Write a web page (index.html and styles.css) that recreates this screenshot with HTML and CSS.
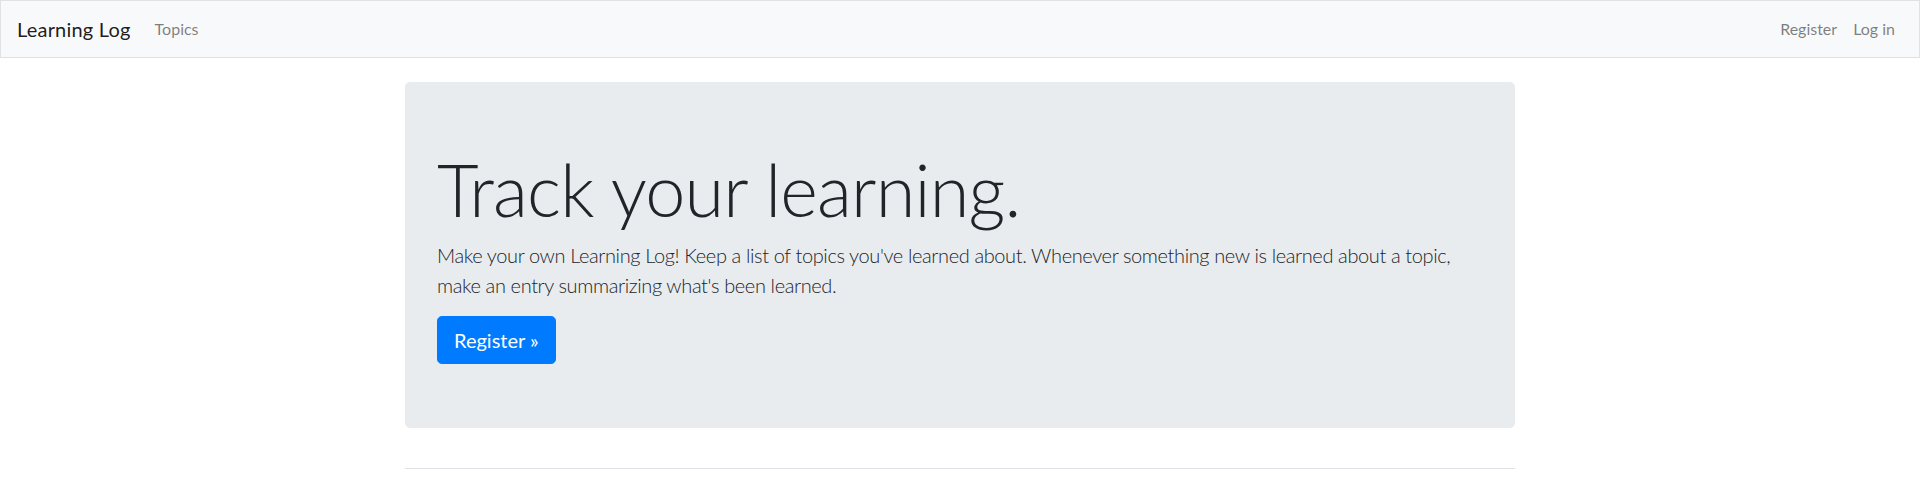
FILE: index.html
```html
<!DOCTYPE html>
<html lang="en">
<head>
<meta charset="utf-8">
<title>Learning Log</title>
<link rel="stylesheet" href="styles.css">
</head>
<body>
<nav class="navbar">
  <a class="brand" href="#">Learning Log</a>
  <ul class="nav nav-left">
    <li><a class="nav-link" href="#">Topics</a></li>
  </ul>
  <ul class="nav nav-right">
    <li><a class="nav-link" href="#">Register</a></li>
    <li><a class="nav-link" href="#">Log in</a></li>
  </ul>
</nav>
<main class="container">
  <div class="page-header">
    <div class="jumbotron">
      <h1 class="display">Track your learning.</h1>
      <p class="lead">Make your own Learning Log! Keep a list of topics you've learned about. Whenever something new is learned about a topic, make an entry summarizing what's been learned.</p>
      <a class="btn" href="#">Register &raquo;</a>
    </div>
  </div>
  <div class="content"></div>
</main>
</body>
</html>
```
FILE: styles.css
```css
* { box-sizing: border-box; }
html, body { margin: 0; padding: 0; }
body {
  font-family: Lato, "Open Sans", sans-serif;
  font-size: 16px;
  line-height: 1.5;
  color: #212529;
  background: #fff;
}
a { text-decoration: none; }

.navbar {
  display: flex;
  align-items: center;
  padding: 8px 16px;
  background: #f8f9fa;
  border: 1px solid #dee2e6;
  margin-bottom: 24px;
}
.brand {
  font-size: 20px;
  line-height: 30px;
  padding: 5px 0;
  margin-right: 16px;
  color: rgba(0,0,0,.9);
  letter-spacing: 0.2px;
}
.nav {
  display: flex;
  list-style: none;
  margin: 0;
  padding: 0;
}
.nav-right { margin-left: auto; }
.nav-link {
  display: block;
  padding: 8px;
  color: rgba(0,0,0,.5);
}

.container {
  width: 1140px;
  margin: 0 auto;
  padding: 0 15px;
}
.page-header {
  padding-bottom: 8px;
  margin-bottom: 8px;
  border-bottom: 1px solid #dee2e6;
}
.jumbotron {
  background: #e9ecef;
  border-radius: 4.8px;
  padding: 64px 32px;
  margin-bottom: 32px;
}
.display {
  font-size: 72px;
  font-weight: 300;
  line-height: 1.2;
  letter-spacing: -0.8px;
  margin: 0 0 8px;
}
.lead {
  font-size: 20px;
  font-weight: 300;
  letter-spacing: -0.38px;
  margin: 0 0 16px;
}
.btn {
  display: inline-block;
  background: #007bff;
  border: 1px solid #007bff;
  color: #fff;
  font-size: 20px;
  line-height: 1.5;
  padding: 8px 16px;
  border-radius: 4.8px;
}
```
